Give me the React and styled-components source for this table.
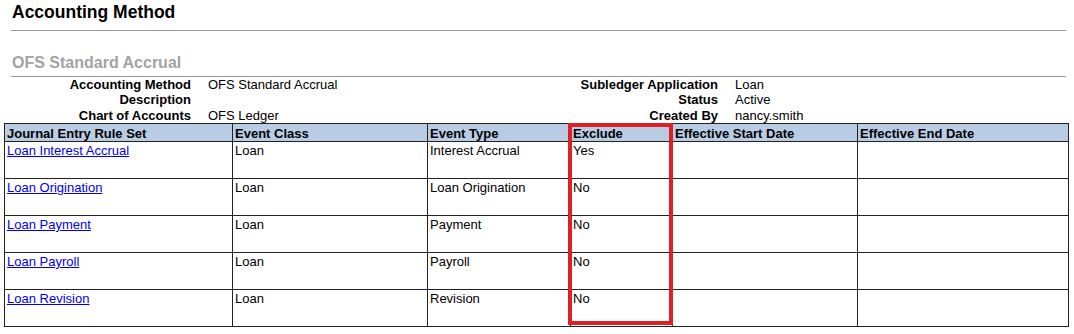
import React from 'react'
import styled, { createGlobalStyle } from 'styled-components'

const Global = createGlobalStyle`
  body {
    margin: 0;
    background: #ffffff;
    font-family: "Liberation Sans", Arial, sans-serif;
    color: #000;
  }
`

const Page = styled.div`
  width: 1074px;
  padding-top: 1px;
`

const Head = styled.div`
  padding: 0 8px 0 11px;
`

const Title = styled.h1`
  margin: 0;
  padding-left: 1px;
  font-size: 17.5px;
  line-height: 22px;
  font-weight: bold;
`

const Rule = styled.div`
  height: 1px;
  background: #9a9a9a;
  margin-top: ${(props) => props.top}px;
`

const SubTitle = styled.h2`
  margin: 21.5px 0 0;
  padding-left: 1px;
  font-size: 16px;
  line-height: 20px;
  font-weight: bold;
  color: #a3a3a3;
`

const Meta = styled.div`
  display: grid;
  grid-template-columns: 191px 301px 192px auto;
  column-gap: 17px;
  font-size: 13px;
  line-height: 15.5px;
`

const Label = styled.div`
  font-weight: bold;
  text-align: right;
`

const Value = styled.div`
  white-space: nowrap;
`

const TableWrap = styled.div`
  position: relative;
  margin-left: 4px;
  width: 1064px;
`

const Table = styled.table`
  border-collapse: collapse;
  table-layout: fixed;
  width: 1064px;
  font-size: 13px;
  line-height: 15px;
`

const Th = styled.th`
  background: #b8cce4;
  border: 1px solid #222;
  height: 17px;
  padding: 0 2px;
  text-align: left;
  vertical-align: bottom;
  font-weight: bold;
  white-space: nowrap;
  overflow: hidden;
`

const Td = styled.td`
  border: 1px solid #222;
  height: 35px;
  padding: 1px 2px 0;
  vertical-align: top;
  white-space: nowrap;
`

const RuleLink = styled.a`
  color: #0000ee;
  text-decoration: underline;
`

const Highlight = styled.div`
  position: absolute;
  left: 564px;
  top: 0;
  width: 105px;
  height: 202px;
  box-sizing: border-box;
  border: 4px solid #e01e25;
  pointer-events: none;
`

const columns = [
  { title: 'Journal Entry Rule Set', width: 228 },
  { title: 'Event Class', width: 195 },
  { title: 'Event Type', width: 143 },
  { title: 'Exclude', width: 102 },
  { title: 'Effective Start Date', width: 185 },
  { title: 'Effective End Date', width: 211 },
]

const rows = [
  { rule: 'Loan Interest Accrual', cls: 'Loan', type: 'Interest Accrual', exclude: 'Yes' },
  { rule: 'Loan Origination', cls: 'Loan', type: 'Loan Origination', exclude: 'No' },
  { rule: 'Loan Payment', cls: 'Loan', type: 'Payment', exclude: 'No' },
  { rule: 'Loan Payroll', cls: 'Loan', type: 'Payroll', exclude: 'No' },
  { rule: 'Loan Revision', cls: 'Loan', type: 'Revision', exclude: 'No' },
]

const App = () => {
  return (
    <Page>
      <Global />
      <Head>
        <Title>Accounting Method</Title>
        <Rule top={7} />
        <SubTitle>OFS Standard Accrual</SubTitle>
        <Rule top={3} />
      </Head>

      <Meta>
        <Label>Accounting Method</Label>
        <Value>OFS Standard Accrual</Value>
        <Label>Subledger Application</Label>
        <Value>Loan</Value>

        <Label>Description</Label>
        <Value></Value>
        <Label>Status</Label>
        <Value>Active</Value>

        <Label>Chart of Accounts</Label>
        <Value>OFS Ledger</Value>
        <Label>Created By</Label>
        <Value>nancy.smith</Value>
      </Meta>

      <TableWrap>
        <Table>
          <colgroup>
            {columns.map((c) => (
              <col key={c.title} style={{ width: c.width }} />
            ))}
          </colgroup>
          <thead>
            <tr>
              {columns.map((c) => (
                <Th key={c.title}>{c.title}</Th>
              ))}
            </tr>
          </thead>
          <tbody>
            {rows.map((r) => (
              <tr key={r.rule}>
                <Td>
                  <RuleLink href="#">{r.rule}</RuleLink>
                </Td>
                <Td>{r.cls}</Td>
                <Td>{r.type}</Td>
                <Td>{r.exclude}</Td>
                <Td></Td>
                <Td></Td>
              </tr>
            ))}
          </tbody>
        </Table>
        <Highlight />
      </TableWrap>
    </Page>
  )
}

export default App
